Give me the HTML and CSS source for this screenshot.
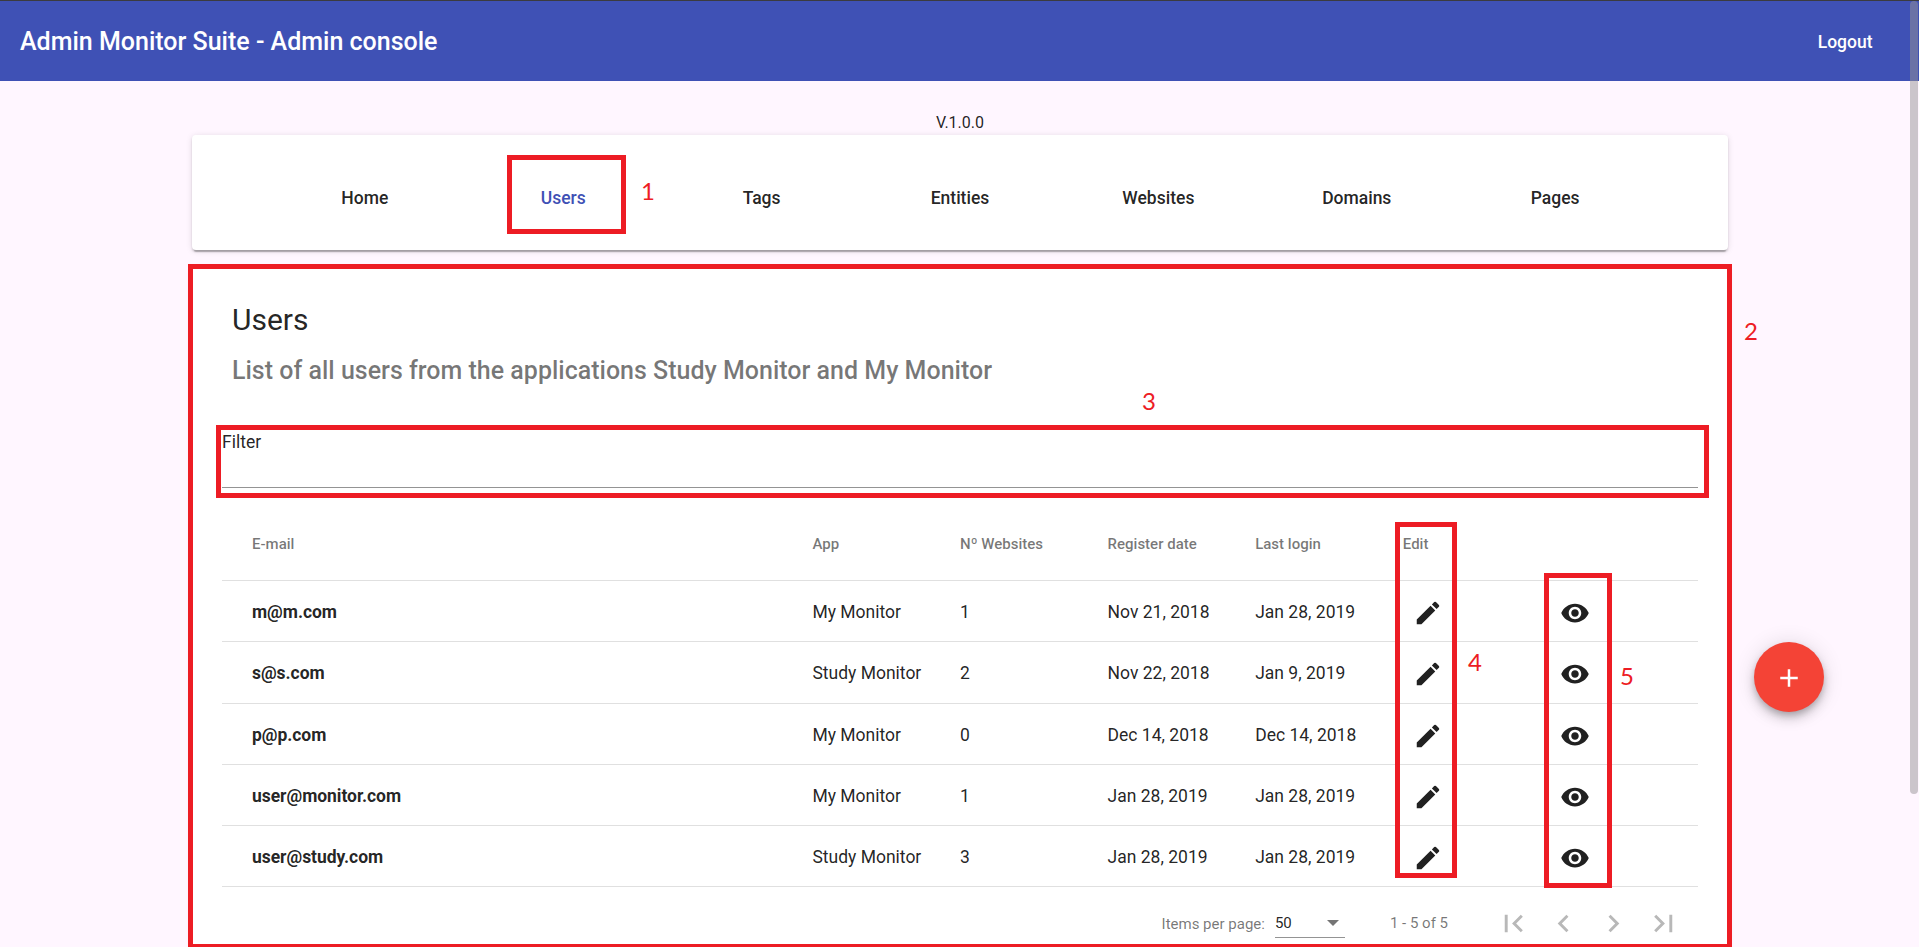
FILE: index.html
```html
<!DOCTYPE html>
<html lang="en">
<head>
<meta charset="utf-8">
<title>Admin Monitor Suite - Admin console</title>
<link rel="stylesheet" href="styles.css">
</head>
<body>
<svg class="defs" width="0" height="0">
  <symbol id="pencil" viewBox="0 0 24 24"><path d="M3 17.25V21h3.75L17.81 9.94l-3.75-3.75L3 17.25zM20.71 7.04a.996.996 0 0 0 0-1.41l-2.34-2.34a.996.996 0 0 0-1.41 0l-1.83 1.83 3.75 3.75 1.83-1.83z"/></symbol>
  <symbol id="eye" viewBox="0 0 24 24"><path d="M12 4.5C7 4.5 2.73 7.61 1 12c1.73 4.39 6 7.5 11 7.5s9.27-3.11 11-7.5c-1.73-4.39-6-7.5-11-7.5zM12 17c-2.76 0-5-2.24-5-5s2.24-5 5-5 5 2.24 5 5-2.24 5-5 5zm0-8c-1.66 0-3 1.34-3 3s1.34 3 3 3 3-1.34 3-3-1.34-3-3-3z"/></symbol>
</svg>
<header class="toolbar">
  <h1 class="toolbar-title">Admin Monitor Suite - Admin console</h1>
  <a class="logout">Logout</a>
</header>
<main class="page">
  <p class="version">V.1.0.0</p>
  <nav class="card nav">
    <a class="nav-link">Home</a>
    <a class="nav-link active">Users</a>
    <a class="nav-link">Tags</a>
    <a class="nav-link">Entities</a>
    <a class="nav-link">Websites</a>
    <a class="nav-link">Domains</a>
    <a class="nav-link">Pages</a>
  </nav>
  <section class="card users">
    <h2 class="title">Users</h2>
    <p class="subtitle">List of all users from the applications Study Monitor and My Monitor</p>
    <div class="filter">Filter</div>
    <div class="table">
      <div class="row head"><span>E-mail</span><span>App</span><span>Nº Websites</span><span>Register date</span><span>Last login</span><span>Edit</span><span></span></div>
      <div class="row"><b>m@m.com</b><span>My Monitor</span><span>1</span><span>Nov 21, 2018</span><span>Jan 28, 2019</span><svg class="icon"><use href="#pencil"/></svg><svg class="icon"><use href="#eye"/></svg></div>
      <div class="row"><b>s@s.com</b><span>Study Monitor</span><span>2</span><span>Nov 22, 2018</span><span>Jan 9, 2019</span><svg class="icon"><use href="#pencil"/></svg><svg class="icon"><use href="#eye"/></svg></div>
      <div class="row"><b>p@p.com</b><span>My Monitor</span><span>0</span><span>Dec 14, 2018</span><span>Dec 14, 2018</span><svg class="icon"><use href="#pencil"/></svg><svg class="icon"><use href="#eye"/></svg></div>
      <div class="row"><b>user@monitor.com</b><span>My Monitor</span><span>1</span><span>Jan 28, 2019</span><span>Jan 28, 2019</span><svg class="icon"><use href="#pencil"/></svg><svg class="icon"><use href="#eye"/></svg></div>
      <div class="row"><b>user@study.com</b><span>Study Monitor</span><span>3</span><span>Jan 28, 2019</span><span>Jan 28, 2019</span><svg class="icon"><use href="#pencil"/></svg><svg class="icon"><use href="#eye"/></svg></div>
    </div>
    <div class="paginator">
      <span class="per-page">Items per page:</span>
      <span class="select">50<i class="caret"></i></span>
      <span class="range">1 - 5 of 5</span>
      <svg class="page-icon" viewBox="0 0 24 24"><path d="M18.41 16.59L13.82 12l4.59-4.59L17 6l-6 6 6 6zM6 6h2v12H6z"/></svg>
      <svg class="page-icon" viewBox="0 0 24 24"><path d="M15.41 7.41L14 6l-6 6 6 6 1.41-1.41L10.83 12z"/></svg>
      <svg class="page-icon" viewBox="0 0 24 24"><path d="M10 6L8.59 7.41 13.17 12l-4.58 4.59L10 18l6-6z"/></svg>
      <svg class="page-icon" viewBox="0 0 24 24"><path d="M5.59 7.41L10.18 12l-4.59 4.59L7 18l6-6-6-6zM16 6h2v12h-2z"/></svg>
    </div>
  </section>
</main>
<button class="fab"><svg class="fab-icon" viewBox="0 0 24 24"><path d="M19 13h-6v6h-2v-6H5v-2h6V5h2v6h6v2z"/></svg></button>
<div class="mark mark-1"></div><span class="num num-1">1</span>
<div class="mark mark-2"></div><span class="num num-2">2</span>
<div class="mark mark-3"></div><span class="num num-3">3</span>
<div class="mark mark-4"></div><span class="num num-4">4</span>
<div class="mark mark-5"></div><span class="num num-5">5</span>
<div class="scrollbar"></div>
</body>
</html>
```
FILE: styles.css
```css
* { box-sizing: border-box; }
body {
  position: relative;
  margin: 0;
  height: 947px;
  overflow: hidden;
  background: #fff6ff;
  color: rgba(0, 0, 0, .87);
  font: 400 17.5px/1.2 Roboto, sans-serif;
}
h1, h2, p { margin: 0; }
.defs { position: absolute; }

.toolbar {
  display: flex;
  align-items: center;
  justify-content: space-between;
  height: 81px;
  padding: 2px 46.5px 0 20px;
  border-top: 1px solid #3b3b3f;
  background: #3f51b5;
  color: #fff;
}
.toolbar-title { font-size: 25px; font-weight: 500; }
.logout { font-weight: 500; }

.page { width: 1536px; margin: 0 auto 0 192px; }
.version {
  height: 54px;
  padding-top: 32px;
  font-size: 16px;
  line-height: 19px;
  text-align: center;
}
.card {
  border-radius: 4px;
  background: #fff;
  box-shadow: 0 4px 1px -2px rgba(0, 0, 0, .2), 0 2px 2px rgba(0, 0, 0, .14), 0 1px 6px rgba(0, 0, 0, .12);
}
.nav {
  display: grid;
  grid-template-columns: repeat(7, 198.4px);
  justify-content: center;
  align-items: center;
  height: 115px;
  padding-top: 12px;
}
.nav-link { font-weight: 500; text-align: center; }
.active { color: #3f51b5; }

.users {
  height: 720px;
  margin-top: 18px;
  padding: 32px 30px 0;
}
.title {
  padding-left: 10px;
  font-size: 30px;
  font-weight: 400;
  line-height: 40px;
}
.subtitle {
  margin-top: 15px;
  padding-left: 10px;
  color: rgba(0, 0, 0, .54);
  font-size: 25px;
  font-weight: 500;
  line-height: 32px;
}
.filter {
  height: 57px;
  margin-top: 44px;
  border-bottom: 1px solid #949494;
  line-height: 22px;
}

.table { margin-top: 23px; }
.row {
  display: grid;
  grid-template-columns: 4fr repeat(6, 1fr);
  align-items: center;
  height: 61.25px;
  padding-top: 3px;
  border-bottom: 1px solid #e0e0e0;
}
.row > :first-child { padding-left: 30px; }
.row b { font-weight: 700; letter-spacing: -.04px; }
.head {
  height: 70px;
  padding: 0 0 4px;
  color: rgba(0, 0, 0, .54);
  font-size: 15px;
  font-weight: 500;
}
.icon {
  width: 30px;
  height: 30px;
  margin: 1px 0 0 10px;
  fill: #212121;
}

.paginator {
  display: flex;
  align-items: center;
  justify-content: flex-end;
  height: 70px;
  padding: 3px 10px 0 0;
  color: rgba(0, 0, 0, .54);
  font-size: 15px;
}
.select {
  display: flex;
  align-items: center;
  justify-content: space-between;
  width: 70px;
  height: 29px;
  margin: 0 45px 0 10px;
  padding: 0 6px 0 0;
  border-bottom: 1px solid #949494;
  color: rgba(0, 0, 0, .87);
}
.caret {
  border: 6px solid transparent;
  border-top-color: #757575;
  border-bottom: 0;
}
.range { margin: 0 40px 2px 0; }
.page-icon {
  width: 35px;
  height: 35px;
  margin: 0 7.5px;
  fill: #b8b8b8;
}

.fab {
  position: absolute;
  left: 1754px;
  top: 642px;
  display: flex;
  align-items: center;
  justify-content: center;
  width: 70px;
  height: 70px;
  padding: 2px 0 0;
  border: 0;
  border-radius: 50%;
  background: #f44336;
  box-shadow: 0 4px 6px -1px rgba(0, 0, 0, .2), 0 7px 12px rgba(0, 0, 0, .14), 0 1px 22px rgba(0, 0, 0, .12);
}
.fab-icon { width: 30px; height: 30px; fill: #fff; }

.mark { position: absolute; border: 5px solid #ed1c24; }
.mark-1 { left: 507px; top: 155px; width: 119px; height: 79px; }
.mark-2 { left: 188px; top: 264px; width: 1544px; height: 685px; }
.mark-3 { left: 216px; top: 425px; width: 1493px; height: 73px; }
.mark-4 { left: 1395px; top: 522px; width: 62px; height: 356px; }
.mark-5 { left: 1544px; top: 573px; width: 68px; height: 315px; }
.num {
  position: absolute;
  color: #ed1c24;
  font: 24px/24px Lato, sans-serif;
}
.num-1 { left: 641px; top: 179px; }
.num-2 { left: 1744px; top: 319px; }
.num-3 { left: 1142px; top: 389px; }
.num-4 { left: 1468px; top: 650px; }
.num-5 { left: 1620px; top: 664px; }

.scrollbar {
  position: absolute;
  left: 1910px;
  top: 1px;
  width: 8px;
  height: 793px;
  border-radius: 4px;
  background: rgba(152, 148, 152, .5);
}
```
